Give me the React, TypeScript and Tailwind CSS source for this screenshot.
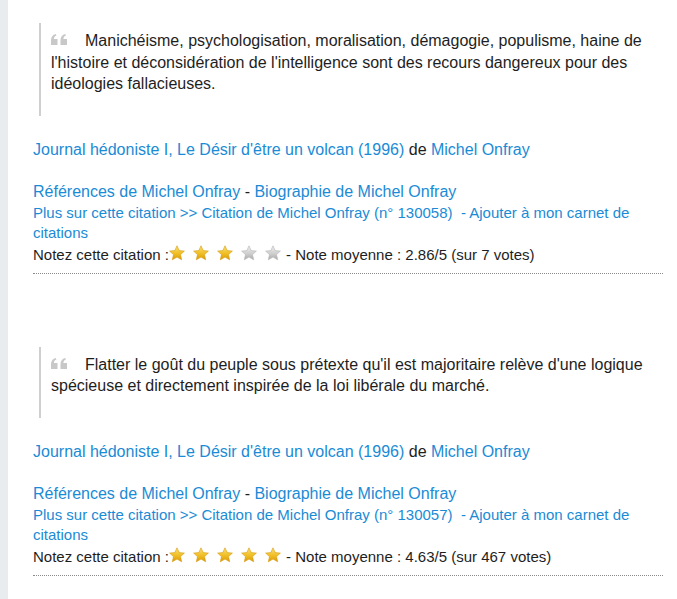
const quotes = [
  {
    text: "Manichéisme, psychologisation, moralisation, démagogie, populisme, haine de l'histoire et déconsidération de l'intelligence sont des recours dangereux pour des idéologies fallacieuses.",
    id: "130058",
    rating: 3,
    note: "2.86/5 (sur 7 votes)",
  },
  {
    text: "Flatter le goût du peuple sous prétexte qu'il est majoritaire relève d'une logique spécieuse et directement inspirée de la loi libérale du marché.",
    id: "130057",
    rating: 5,
    note: "4.63/5 (sur 467 votes)",
  },
];

const Star = ({ on }: { on: boolean }) => (
  <svg className="w-4 h-4 inline-block" viewBox="0 0 16 16" aria-hidden="true">
    <defs>
      <linearGradient id={on ? "sg" : "sgg"} x1="0" y1="0" x2="0" y2="1">
        <stop offset="0" stopColor={on ? "#fbe37a" : "#efefef"} />
        <stop offset="0.55" stopColor={on ? "#f0be24" : "#cfcfcf"} />
        <stop offset="1" stopColor={on ? "#d99a06" : "#a9a9a9"} />
      </linearGradient>
    </defs>
    <path
      d="M8 0.8l2.2 4.8 5.2 0.5-3.9 3.5 1.2 5.2L8 12.1 3.3 14.8l1.2-5.2L0.6 6.1l5.2-0.5z"
      fill={on ? "url(#sg)" : "url(#sgg)"}
      stroke={on ? "#d59a10" : "#b5b5b5"}
      strokeWidth={0.6}
      strokeLinejoin="round"
    />
  </svg>
);

const QuoteMark = () => (
  <svg className="inline-block w-[17px] h-[11px] mr-[17px] align-[1px]" viewBox="0 0 17 11" aria-hidden="true">
    <path d="M0 11V6.5C0 3 1.6 0.8 4.8 0l0.6 1.6C3.8 2.2 3 3.3 2.9 5H6.5v6z" fill="#c8c8c8" />
    <path d="M9.5 11V6.5c0-3.5 1.6-5.7 4.8-6.5l0.6 1.6c-1.6 0.6-2.4 1.7-2.5 3.4h3.6v6z" fill="#c8c8c8" />
  </svg>
);

const A = ({ children }: { children: React.ReactNode }) => (
  <a href="#" className="text-[#1a8bd6]">
    {children}
  </a>
);

export default function App() {
  return (
    <div className="flex min-h-screen bg-white font-['Liberation_Sans',Arial,sans-serif] text-[#1e1e1e]">
      <div className="w-[8px] shrink-0 bg-[#e8ecef]" />
      <main className="flex-1 pl-[25px] pr-[14px]">
        {quotes.map((q) => (
          <div key={q.id} className="pt-[23px] mb-[50px]">
            <blockquote className="ml-[6px] border-l-2 border-[#cfcfcf] pl-[10px] pt-[7px] pb-[21px] text-[16px] leading-[21.5px]">
              <QuoteMark />
              {q.text}
            </blockquote>
            <p className="mt-[23px] text-[16px] leading-[21px]">
              <A>Journal hédoniste I, Le Désir d'être un volcan (1996)</A> de <A>Michel Onfray</A>
            </p>
            <div className="mt-[21px] pb-[7px] border-b border-dotted border-[#8a8a8a]">
              <p className="text-[16px] leading-[21px]">
                <A>Références de Michel Onfray</A> - <A>Biographie de Michel Onfray</A>
              </p>
              <p className="mt-[1px] text-[15px] leading-[20.5px]">
                <A>Plus sur cette citation &gt;&gt; Citation de Michel Onfray (n° {q.id})</A>
                {"\u00a0 "}
                <A>- Ajouter à mon carnet de citations</A>
              </p>
              <p className="text-[15px] leading-[22px]">
                Notez cette citation :
                <span className="inline-flex gap-2 align-[-1px] mr-[1px]">
                  {[1, 2, 3, 4, 5].map((n) => (
                    <Star key={n} on={n <= q.rating} />
                  ))}
                </span>{" "}
                - Note moyenne : {q.note}
              </p>
            </div>
          </div>
        ))}
      </main>
    </div>
  );
}
